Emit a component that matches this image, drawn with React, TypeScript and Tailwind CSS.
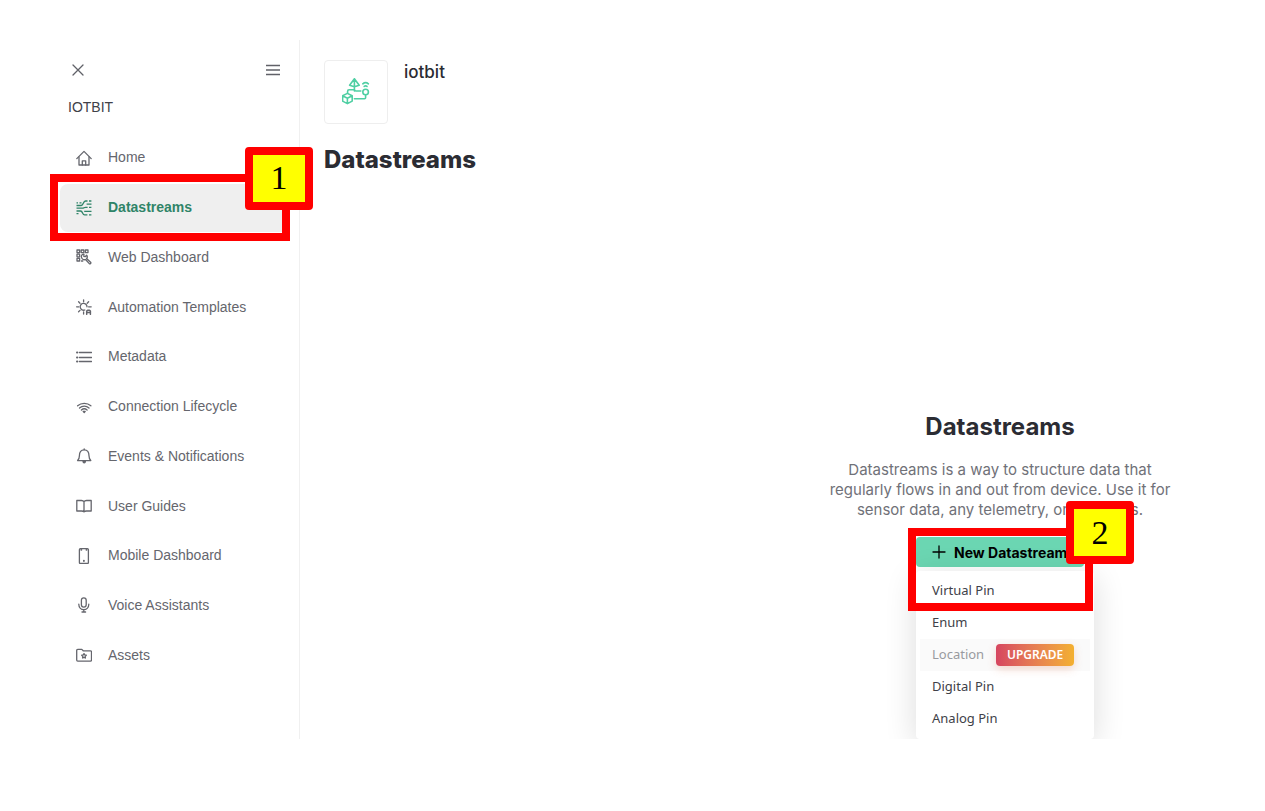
import type { ReactNode } from 'react';

const stroke = {
  fill: 'none',
  stroke: 'currentColor',
  strokeWidth: 1.3,
  strokeLinecap: 'round' as const,
  strokeLinejoin: 'round' as const,
};

function Icon({ children }: { children: ReactNode }) {
  return (
    <svg className="size-4 shrink-0" viewBox="0 0 16 16" aria-hidden="true" {...stroke}>
      {children}
    </svg>
  );
}

const items: { label: string; icon: ReactNode; active?: boolean }[] = [
  {
    label: 'Home',
    icon: (
      <>
        <path d="M.8 8.6 8 1.4l7.2 7.2" />
        <path d="M3 7v8h10V7" />
        <path d="M6.3 15v-4.2h3.4V15" />
      </>
    ),
  },
  {
    label: 'Datastreams',
    active: true,
    icon: (
      <g strokeLinecap="butt">
        <path d="M.5 5.5h4.7c2.4 0 1.8-4.5 4.3-4.5h2M13 1h2.4" />
        <path d="M.5 2.8H2M3.5 2.8h2M10.6 4.2h4.9" />
        <path d="M.5 8.2h5.7c2 0 1.6-.9 3.4-.9h2M13 7.3h2.4" />
        <path d="M.5 11h4c2.6 0 1.6 3.9 4.1 3.9h2.8M13 14.9h2.4M8.2 11.4h7.3M.5 13.7h2" />
      </g>
    ),
  },
  {
    label: 'Web Dashboard',
    icon: (
      <>
        <path d="M1 1h2.6v2.6H1zM5.2 1h2.6v2.6H5.2zM9.4 1H12v2.6H9.4zM1 5.2h2.6v2.6H1zM1 9.4h2.6V12H1z" />
        <path d="M5.6 8.6c-.8-1.9.6-3.7 2.4-3.4L7.8 7.3l1.4.4 1.4-1.5c1.1 1.4.6 2.7 0 3.3l4 3.8c.8.9-.5 2.1-1.3 1.3L9.5 10.5c-1.5.6-3.2 0-3.9-1.9zM5.4 12h1.4" />
      </>
    ),
  },
  {
    label: 'Automation Templates',
    icon: (
      <>
        <path d="M11 7.8A3.4 3.4 0 1 0 8.8 11" />
        <path d="M7.6 .8v2M2.6 2.8l1.4 1.4M12.6 2.8l-1.4 1.4M.6 7.8h2.2M12.6 7.8h2.6M4 11.4l-1.4 1.4M7.6 12.8v2.2" />
        <path d="M10.7 15.3v-3.2l.9-.9h1.9l.9.9v3.2M10.7 13.6h3.7" strokeWidth="1.5" />
      </>
    ),
  },
  {
    label: 'Metadata',
    icon: (
      <>
        <path d="M3.4 3.5h12.2M3.4 8.5h12.2M3.4 12.5h12.2" />
        <path d="M1 3.5h.3M1 8.5h.3M1 12.5h.3" strokeWidth="2" />
      </>
    ),
  },
  {
    label: 'Connection Lifecycle',
    icon: (
      <>
        <path d="M1.6 6.8c3.7-3.2 9.6-3.2 13.3 0M3.5 9c2.7-2.4 6.8-2.4 9.5 0M5.4 11c1.6-1.4 4.1-1.4 5.7 0" />
        <path d="M7.2 12.3h2l-1 1.2z" fill="currentColor" />
      </>
    ),
  },
  {
    label: 'Events & Notifications',
    icon: (
      <>
        <path d="M1.6 12.6h13.2c-1.4-1.3-1.8-2.6-1.8-4.8 0-3.8-1.6-6-4.8-6s-4.8 2.2-4.8 6c0 2.2-.4 3.5-1.8 4.8z" />
        <path d="M7 13.4c.2 1.9 2.2 1.9 2.4 0zM8.2 1.6V.8" fill="currentColor" />
      </>
    ),
  },
  {
    label: 'User Guides',
    icon: (
      <path d="M8 3.8C7.5 2.8 6.5 2.5 5.5 2.5H.8V13h4.7c1 0 2 .2 2.5.9.5-.7 1.5-.9 2.5-.9h4.7V2.5h-4.7c-1 0-2 .3-2.5 1.3zV13.5" />
    ),
  },
  {
    label: 'Mobile Dashboard',
    icon: (
      <>
        <rect x="3.4" y=".7" width="9" height="14.8" rx="1" />
        <path d="M5.2 1.8h.2M10.4 1.8h.2M7.9 12.6v.5" strokeWidth="1.8" />
      </>
    ),
  },
  {
    label: 'Voice Assistants',
    icon: (
      <>
        <rect x="5.4" y=".8" width="4.8" height="9.4" rx="2.4" />
        <path d="M2.8 7.2c0 7.2 10 7.2 10 0M7.8 12.6V15M6 15h3.6" />
      </>
    ),
  },
  {
    label: 'Assets',
    icon: (
      <>
        <path d="M.7 3.6c0-.8.4-1.2 1.1-1.2h4l1.4 1.4h7.3c.6 0 1 .4 1 1v8.3c0 .7-.4 1-1 1H1.7c-.6 0-1-.4-1-1z" />
        <path d="m8 6.6.7 1.3 1.6.3-1.1 1.2.2 1.6L8 10.4 6.6 11l.2-1.6-1.1-1.2 1.6-.3z" />
      </>
    ),
  },
];

function Step({ n, className }: { n: number; className: string }) {
  return (
    <span
      className={`absolute flex h-[63px] w-[68px] items-center justify-center rounded-[4px] border-8 border-[#ff0000] bg-[#ffff00] font-['Liberation_Serif',serif] text-[34px] leading-none font-normal text-black ${className}`}
    >
      {n}
    </span>
  );
}

function ProductLogo() {
  return (
    <svg className="h-7 w-7 text-[#4fcfa3]" viewBox="0 0 28 28" aria-hidden="true" {...stroke} strokeWidth={1.6}>
      <path d="m12.4.8-4.8 6.4 4.8 1.6 4.8-1.6zV13" />
      <path d="M5.6 15.2v-1.8c0-1 .5-1.6 1.5-1.6h5.3M12.4 11.8c.2.8.6 1.2 1.4 1.2h5" />
      <path d="m5.4 15.4 4.8 2.4v5.3l-4.8 2.5-4.8-2.5v-5.3zM.6 17.8l4.8 2.4 4.8-2.4M5.4 20.2v5.4" />
      <circle cx="23.6" cy="14" r="2.8" />
      <path d="M20.8 5.8c1.6-1.4 4-1.4 5.6 0M22.2 8.4c.8-.6 2-.6 2.8 0M23.6 16.8v3c0 .6-.3 1-1 1H12.4" />
    </svg>
  );
}

function Sidebar() {
  return (
    <aside className="ml-[50px] flex w-[250px] shrink-0 flex-col border-r border-[#f0f0f0] pr-[9px] pb-[59px] pl-[10px]">
      <div className="flex h-[60px] items-center justify-between pr-[10px] pl-[11px] text-[#606168]">
        <button type="button" aria-label="Close" className="block">
          <svg className="size-3.5" viewBox="0 0 14 14" {...stroke}>
            <path d="m2 2 10 10M12 2 2 12" />
          </svg>
        </button>
        <button type="button" aria-label="Menu" className="block">
          <svg className="size-3.5" viewBox="0 0 14 14" {...stroke} strokeLinecap="butt">
            <path d="M0 2.5h14M0 7h14M0 11.5h14" />
          </svg>
        </button>
      </div>
      <p className="mb-[19px] pl-2 text-[14px] leading-[14px] text-[#404148]">IOTBIT</p>
      <nav className="flex flex-1">
        <ul className="flex flex-1 flex-col">
          {items.map((item) => (
            <li key={item.label} className="relative flex flex-1 flex-col justify-center">
              <a
                href="#"
                className={
                  item.active
                    ? 'flex h-12 items-center gap-4 rounded-lg bg-[#efefef] pl-4 text-[14px] font-bold text-[#2f8468]'
                    : 'flex h-12 items-center gap-4 rounded-lg pl-4 text-[14px] text-[#65666d]'
                }
              >
                <Icon>{item.icon}</Icon>
                {item.label}
              </a>
              {item.active && (
                <>
                  <span className="absolute -inset-y-[9px] right-0 -left-[10px] border-8 border-[#ff0000]" />
                  <Step n={1} className="-top-9 left-[185px] z-10" />
                </>
              )}
            </li>
          ))}
        </ul>
      </nav>
    </aside>
  );
}

const row = 'flex h-8 w-full items-center gap-3 px-3 text-left';

function Creator() {
  return (
    <div className="relative mt-[17px] ml-[116px] w-[168px]">
      <button
        type="button"
        className="flex h-[30px] w-full items-center gap-2 rounded-[4px] bg-[#6bd6b2] pl-4 font-[Inter,sans-serif] text-[14px] font-bold whitespace-nowrap text-black"
      >
        <svg className="size-3.5 shrink-0" viewBox="0 0 14 14" aria-hidden="true" {...stroke}>
          <path d="M7 1v12M1 7h12" />
        </svg>
        New Datastream
      </button>
      <div className="mt-1 w-[178px] rounded-[4px] bg-white p-1 font-['Noto_Sans',sans-serif] text-[13px] text-[#404148] shadow-[0_6px_32px_rgba(0,0,0,0.14)]">
        <button type="button" className={row}>Virtual Pin</button>
        <button type="button" className={row}>Enum</button>
        <button type="button" className={`${row} bg-[#fafafa] text-[#999a9f]`}>
          Location
          <span className="flex h-[22px] w-[78px] shrink-0 items-center justify-center rounded-[4px] bg-linear-to-r from-[#d6455f] to-[#f3b02f] text-[12px] font-semibold text-white shadow-[0_3px_8px_rgba(224,110,70,0.25)]">
            UPGRADE
          </span>
        </button>
        <button type="button" className={row}>Digital Pin</button>
        <button type="button" className={row}>Analog Pin</button>
      </div>
      <span className="pointer-events-none absolute -top-[9px] -left-2 h-[83px] w-[185px] border-8 border-[#ff0000]" />
      <Step n={2} className="-top-9 left-[150px]" />
    </div>
  );
}

export default function App() {
  return (
    <div className="flex min-h-screen items-start bg-white pt-10 font-['Liberation_Sans',Arial,sans-serif]">
      <div className="flex min-w-0 flex-1">
        <Sidebar />
        <main className="min-w-0 flex-1 overflow-hidden pt-5 pl-6">
          <header className="flex gap-4">
            <div className="flex size-16 items-center justify-center rounded-[4px] border border-[#eeeeee]">
              <ProductLogo />
            </div>
            <p className="font-[Inter,sans-serif] text-[17px] leading-[24px] font-medium text-[#2b2c33]">iotbit</p>
          </header>
          <h1 className="mt-[22px] font-[Inter,sans-serif] text-[24px] leading-[28px] font-extrabold text-[#2b2c33]">
            Datastreams
          </h1>
          <section className="mt-[239px] mr-[65px] ml-auto w-[400px]">
            <h2 className="text-center font-[Inter,sans-serif] text-[24px] leading-[28px] font-bold text-[#2b2c33]">
              Datastreams
            </h2>
            <p className="mt-[19px] px-5 text-center font-[Inter,sans-serif] text-[15px] leading-5 text-[#707178]">
              Datastreams is a way to structure data that regularly flows in and out from device. Use it for sensor
              data, any telemetry, or actuators.
            </p>
            <Creator />
          </section>
        </main>
      </div>
    </div>
  );
}
